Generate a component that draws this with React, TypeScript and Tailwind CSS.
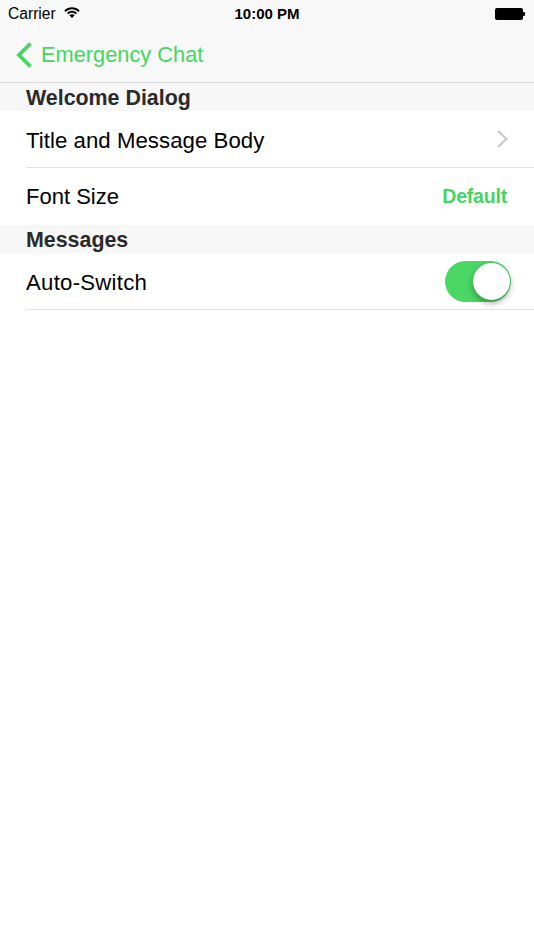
export default function App() {
  return (
    <div className="w-[534px] h-[950px] bg-white font-['Liberation_Sans',Arial,sans-serif] text-black overflow-hidden">
      <header className="h-[83px] bg-[#f8f8f8] border-b border-[#dcdcdc] flex flex-col">
        <div className="h-[28px] relative flex items-center justify-between pl-2 pr-[9px] text-[15.6px]">
          <div className="flex items-center gap-[8px]">
            <span>Carrier</span>
            <svg width="16" height="13" viewBox="0 0 16 12" className="mb-[3px]">
              <path d="M0.3 3.9C4.4 -0.4 11.6 -0.4 15.7 3.9L14.2 5.4C10.9 1.9 5.1 1.9 1.8 5.4Z" fill="#000" />
              <path d="M2.9 6.4C5.7 3.5 10.3 3.5 13.1 6.4L11.7 7.8C9.7 5.6 6.3 5.6 4.3 7.8Z" fill="#000" />
              <path d="M5.3 8.8C6.8 7.3 9.2 7.3 10.7 8.8L8 11.6Z" fill="#000" />
            </svg>
          </div>
          <span className="absolute left-0 right-0 text-center font-bold text-[15px]">10:00 PM</span>
          <div className="flex items-center">
            <div className="w-[28px] h-[12px] bg-black rounded-[2px]" />
            <div className="w-[2px] h-[4px] bg-black rounded-r-[1px]" />
          </div>
        </div>
        <div className="flex-1 flex items-center pl-[15px] text-[#45d661]">
          <svg width="18" height="28" viewBox="0 0 18 28" className="mr-[8px]">
            <path d="M15.5 2.5L4 14L15.5 25.5" fill="none" stroke="#45d661" strokeWidth="3.8" />
          </svg>
          <span className="text-[21.8px] leading-none">Emergency Chat</span>
        </div>
      </header>

      <SectionHeader title="Welcome Dialog" />
      <Row label="Title and Message Body" labelClass="text-[22.2px] pt-[3px] tracking-[0.05px]">
        <svg width="13" height="20" viewBox="0 0 13 20" className="mr-[-2px]">
          <path d="M2 2L10.5 10L2 18" fill="none" stroke="#c7c7cc" strokeWidth="2.2" />
        </svg>
      </Row>
      <Row label="Font Size" labelClass="text-[22px]" noBorder>
        <span className="text-[19.5px] font-bold text-[#45d661] tracking-[-0.2px]">Default</span>
      </Row>

      <SectionHeader title="Messages" />
      <Row label="Auto-Switch" labelClass="text-[22.2px] pt-[3px] tracking-[0.25px]">
        <div className="w-[66px] h-[41px] rounded-full bg-[#4ad763] relative mr-[-4px]">
          <div className="absolute right-[1px] top-[2px] w-[37px] h-[37px] rounded-full bg-white shadow-[0_3px_6px_rgba(0,0,0,0.35)]" />
        </div>
      </Row>
    </div>
  );
}

function SectionHeader({ title }: { title: string }) {
  return (
    <div className="h-[28px] bg-[#f7f7f7] pl-[26px] pt-[2px] flex items-center text-[21.4px] font-bold text-[#2a2a2a]">
      {title}
    </div>
  );
}

function Row({ label, labelClass, children, noBorder }: { label: string; labelClass: string; children: React.ReactNode; noBorder?: boolean }) {
  return (
    <div className="pl-[26px]">
      <div className={noBorder ? "h-[57px] flex items-center justify-between pr-[27px]" : "h-[57px] flex items-center justify-between pr-[27px] border-b border-[#e0e0e0]"}>
        <span className={labelClass}>{label}</span>
        {children}
      </div>
    </div>
  );
}
